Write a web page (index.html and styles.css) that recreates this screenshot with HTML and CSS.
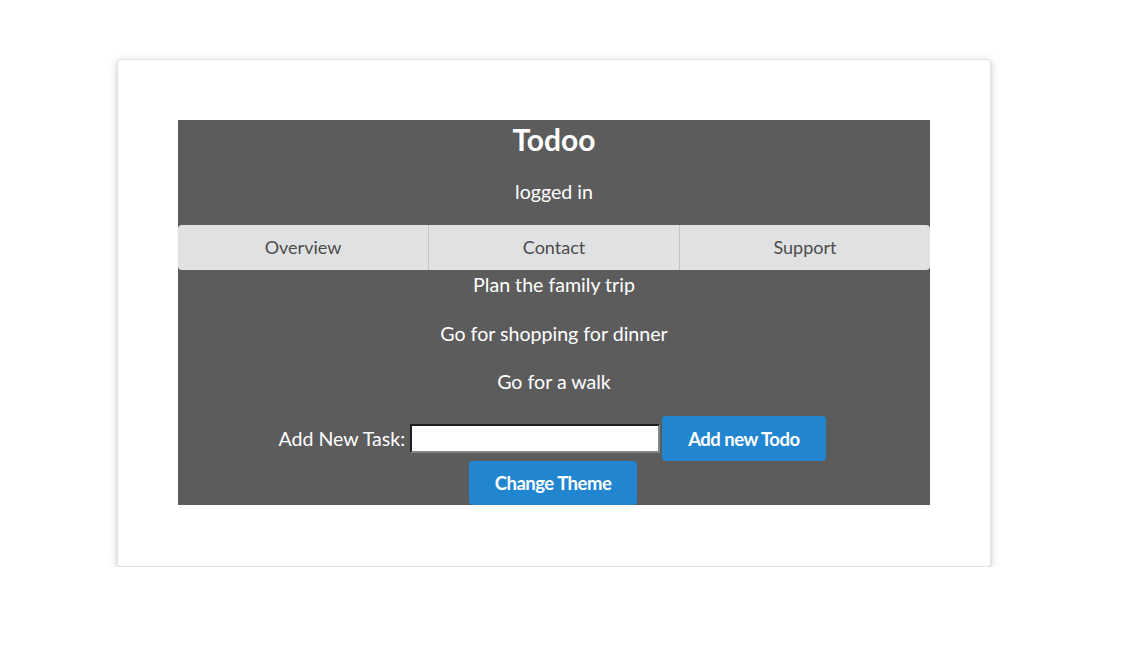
FILE: index.html
```html
<!DOCTYPE html>
<html>
<head>
<meta charset="utf-8">
<link rel="stylesheet" href="styles.css">
<title>Todoo</title>
</head>
<body>
<div class="page">
  <div class="card">
    <div class="app">
      <h1 class="title">Todoo</h1>
      <p class="status">logged in</p>
      <nav class="menu">
        <a class="menu-item">Overview</a>
        <a class="menu-item">Contact</a>
        <a class="menu-item">Support</a>
      </nav>
      <div class="todos">
        <p class="todo">Plan the family trip</p>
        <p class="todo">Go for shopping for dinner</p>
        <p class="todo">Go for a walk</p>
      </div>
      <div class="add-row">
        <label class="add-label" for="task">Add New Task:</label>
        <input class="add-input" id="task" type="text">
        <button class="btn">Add new Todo</button>
      </div>
      <div class="theme-row">
        <button class="btn">Change Theme</button>
      </div>
    </div>
  </div>
</div>
</body>
</html>
```
FILE: styles.css
```css
* { box-sizing: border-box; }
html, body { margin: 0; padding: 0; background: #fff; }
body { font-family: Lato, "Noto Sans", sans-serif; }

.page {
  padding: 59px 0 0 117px;
}
.card {
  width: 874px;
  padding: 60px 60px 61px;
  background: #fff;
  border: 1px solid rgba(34, 36, 38, 0.12);
  border-radius: 4px;
  box-shadow: 0 2px 4px 0 rgba(34, 36, 38, 0.12), 0 2px 10px 0 rgba(34, 36, 38, 0.15);
}
.app {
  background: #5c5c5c;
  color: #fff;
  text-align: center;
}
.title {
  margin: 0;
  font-size: 30px;
  font-weight: 700;
  line-height: 38px;
}
.status {
  margin: 19.5px 0 0;
  font-size: 19.6px;
  line-height: 27px;
}
.menu {
  display: flex;
  margin-top: 20.5px;
  height: 45px;
  background: #e0e1e2;
  border-radius: 4px;
}
.menu-item {
  flex: 1;
  display: flex;
  align-items: center;
  justify-content: center;
  padding-bottom: 2px;
  font-size: 18px;
  color: #4c4c4c;
  border-left: 1px solid #c4c5c6;
}
.menu-item:first-child { border-left: none; }
.todos {
  padding-top: 1px;
}
.todo {
  margin: 0 0 21.5px;
  font-size: 19.6px;
  line-height: 27px;
}
.todo:last-child { margin-bottom: 0; }
.add-row {
  display: flex;
  justify-content: center;
  align-items: center;
  margin-top: 21px;
  padding-right: 4px;
}
.add-label {
  font-size: 19.6px;
  margin-right: 5px;
}
.add-input {
  width: 250px;
  height: 29px;
  margin: 0 2px 0 0;
  padding: 1px 2px;
  border-style: solid;
  border-width: 2px;
  border-color: #1e1e1e #858585 #858585 #1e1e1e;
  background: #fff;
  font-family: inherit;
  font-size: 14px;
}
.btn {
  height: 45px;
  padding: 0 26px;
  border: none;
  border-radius: 4px;
  background: #2185d0;
  color: #fff;
  font-family: Lato, "Noto Sans", sans-serif;
  font-size: 18.5px;
  letter-spacing: -0.5px;
  font-weight: 700;
  cursor: pointer;
}
.theme-row {
  display: flex;
  justify-content: center;
  padding-right: 2px;
}
.theme-row .btn { height: 44px; }
```
